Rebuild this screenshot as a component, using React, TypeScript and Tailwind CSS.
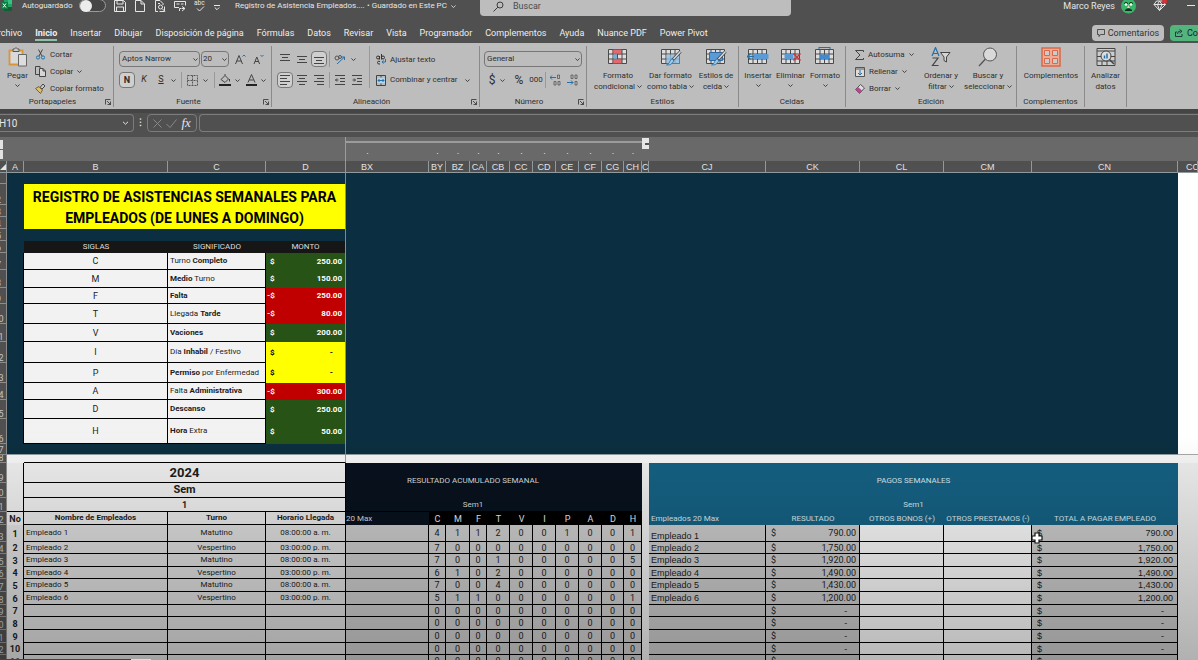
import React from 'react';
import clsx from 'clsx';

const tabs = [
  'Archivo', 'Inicio', 'Insertar', 'Dibujar', 'Disposición de página', 'Fórmulas', 'Datos', 'Revisar',
  'Vista', 'Programador', 'Complementos', 'Ayuda', 'Nuance PDF', 'Power Pivot',
];

const columns = [
  { name: '', width: 'w-[7px]' },
  { name: 'A', width: 'w-[17px]' },
  { name: 'B', width: 'w-36' },
  { name: 'C', width: 'w-[98px]' },
  { name: 'D', width: 'w-20' },
  { name: 'BX', width: 'w-[83px]' },
  { name: 'BY', width: 'w-[17px]' },
  { name: 'BZ', width: 'w-6' },
  { name: 'CA', width: 'w-[17px]' },
  { name: 'CB', width: 'w-[23px]' },
  { name: 'CC', width: 'w-[23px]' },
  { name: 'CD', width: 'w-[23px]' },
  { name: 'CE', width: 'w-[23px]' },
  { name: 'CF', width: 'w-[23px]' },
  { name: 'CG', width: 'w-[22px]' },
  { name: 'CH', width: 'w-[18px]' },
  { name: 'CI', width: 'w-[7px]' },
  { name: 'CJ', width: 'w-[117px]' },
  { name: 'CK', width: 'w-[94px]' },
  { name: 'CL', width: 'w-[84px]' },
  { name: 'CM', width: 'w-[88px]' },
  { name: 'CN', width: 'w-[146px]' },
  { name: 'CO', width: '' },
];

const GREEN = 'bg-[#275317] text-white';
const RED = 'bg-[#c00000] text-white';
const YELLOW = 'bg-[#ffff00] text-black';

const codes = [
  { code: 'C', label: <>Turno <b>Completo</b></>, sign: '$', amount: '250.00', tone: GREEN, height: 'h-[17px]' },
  { code: 'M', label: <><b>Medio</b> Turno</>, sign: '$', amount: '150.00', tone: GREEN, height: 'h-[18px]' },
  { code: 'F', label: <b>Falta</b>, sign: '-$', amount: '250.00', tone: RED, height: 'h-4' },
  { code: 'T', label: <>Llegada <b>Tarde</b></>, sign: '-$', amount: '80.00', tone: RED, height: 'h-5' },
  { code: 'V', label: <b>Vaciones</b>, sign: '$', amount: '200.00', tone: GREEN, height: 'h-[18px]' },
  { code: 'I', label: <>Día <b>Inhabil</b> / Festivo</>, sign: '$', amount: '-', tone: YELLOW, height: 'h-[21px]' },
  { code: 'P', label: <><b>Permiso</b> por Enfermedad</>, sign: '$', amount: '-', tone: YELLOW, height: 'h-5' },
  { code: 'A', label: <>Falta <b>Administrativa</b></>, sign: '-$', amount: '300.00', tone: RED, height: 'h-[17px]' },
  { code: 'D', label: <b>Descanso</b>, sign: '$', amount: '250.00', tone: GREEN, height: 'h-[19px]' },
  { code: 'H', label: <><b>Hora</b> Extra</>, sign: '$', amount: '50.00', tone: GREEN, height: 'h-[25px]' },
];

const AM = '08:00:00 a. m.';
const PM = '03:00:00 p. m.';

const employees = [
  { name: 'Empleado 1', shift: 'Matutino', time: AM, counts: '4112001001', total: '790.00', height: 'h-[17px]' },
  { name: 'Empleado 2', shift: 'Vespertino', time: PM, counts: '7000000000', total: '1,750.00', height: 'h-3' },
  { name: 'Empleado 3', shift: 'Matutino', time: AM, counts: '7001000005', total: '1,920.00', height: 'h-[13px]' },
  { name: 'Empleado 4', shift: 'Vespertino', time: PM, counts: '6102000000', total: '1,490.00', height: 'h-3' },
  { name: 'Empleado 5', shift: 'Matutino', time: AM, counts: '7004000000', total: '1,430.00', height: 'h-[13px]' },
  { name: 'Empleado 6', shift: 'Vespertino', time: PM, counts: '5110000001', total: '1,200.00', height: 'h-[13px]' },
  { name: '', shift: '', time: '', counts: '0000000000', total: '-', height: 'h-3' },
  { name: '', shift: '', time: '', counts: '0000000000', total: '-', height: 'h-[13px]' },
  { name: '', shift: '', time: '', counts: '0000000000', total: '-', height: 'h-[13px]' },
  { name: '', shift: '', time: '', counts: '0000000000', total: '-', height: 'h-3' },
  { name: '', shift: '', time: '', counts: '0000000000', total: '-', height: 'h-[13px]' },
];

const Chevron = ({ className }: { className?: string }) => (
  <svg className={clsx('h-[5px] w-[5px] shrink-0', className)} viewBox="0 0 6 6" fill="none" stroke="currentColor">
    <path d="M0.5 1.8 3 4.2 5.5 1.8" />
  </svg>
);

/* ---------- title bar ---------- */

const TitleBar = () => (
  <header className="flex h-[22px] items-start overflow-hidden text-[9px] leading-3 text-[#e6e6e6]">
    <svg className="ml-px h-3 w-[11px] shrink-0" viewBox="0 0 11 12">
      <rect x="3" y="0" width="8" height="11" fill="#21a366" />
      <rect x="7" y="0" width="4" height="4" fill="#33c481" />
      <rect x="3" y="7" width="8" height="4" fill="#185c37" />
      <rect x="0" y="2" width="7" height="7" fill="#107c41" />
      <path d="M2 3.5 5 7.5M5 3.5 2 7.5" stroke="#fff" />
    </svg>
    <label className="ml-[10px] flex">
      <span className="w-[57px] text-[8px]">Autoguardado</span>
      <input type="checkbox" className="peer sr-only" />
      <span className="-mt-px flex h-[13px] w-[27px] items-center rounded-full border border-[#9a9a9a] bg-[#454545]">
        <span className="h-3 w-3 rounded-full bg-[#ececec]" />
      </span>
    </label>
    <div className="ml-2 flex gap-2">
      <button aria-label="Guardar">
        <svg className="h-3 w-3" viewBox="0 0 12 12" fill="none" stroke="currentColor">
          <path d="M0.5 0.5h9l2 2v9h-11zM3 0.5v3.5h6V0.5M2.5 11.500V7h7v4.500" />
        </svg>
      </button>
      <button aria-label="Nuevo">
        <svg className="h-3 w-3" viewBox="0 0 12 12" fill="none" stroke="currentColor">
          <path d="M1.500 0.500h5.500l3.500 3.500v7.500h-9zM7 0.500v3.500h3.500" />
        </svg>
      </button>
      <button aria-label="Vista previa">
        <svg className="h-3 w-3" viewBox="0 0 12 12" fill="none" stroke="currentColor">
          <path d="M4 11.500H1.500V0.500h4.500l3 3v1.500M4 3.500h2" />
          <circle cx="6.500" cy="7" r="2" />
          <path d="M8 8.500l3 3M5.500 11.500h5v-5" />
        </svg>
      </button>
      <button aria-label="Formulario">
        <svg className="h-3 w-3" viewBox="0 0 12 12" fill="none" stroke="currentColor">
          <path d="M5 7.500H0.500v-6h11v4M2.500 4h3M7 4h2.500M5.500 11V8.500h2M8 6.500l3 2-3 2.500M11 8.500H8" />
        </svg>
      </button>
      <button aria-label="Ortografía">
        <svg className="h-3 w-3" viewBox="0 0 12 12" fill="none" stroke="currentColor">
          <text x="0" y="5" fontSize="6.500" fill="currentColor" stroke="none">abc</text>
          <path d="M3 8.500 5.500 11 10 6.500" />
        </svg>
      </button>
      <button aria-label="Personalizar">
        <svg className="mt-1 h-[6px] w-[6px]" viewBox="0 0 6 6" fill="none" stroke="currentColor">
          <path d="M0 0.500h6M0.800 2.500 3 4.700 5.200 2.500" />
        </svg>
      </button>
    </div>
    <h1 className="ml-[15px] w-[132px] whitespace-nowrap text-[8px]">Registro de Asistencia Empleados....</h1>
    <button className="flex h-3 w-[90px] items-center gap-1 whitespace-nowrap text-[8px] leading-3">
      • Guardado en Este PC <Chevron />
    </button>
    <label className="ml-[23px] flex h-4 w-[311px] items-center gap-[9px] rounded-b-sm bg-[#bdbdbd] pl-[13px] text-[#3c3c3c]">
      <svg className="-mt-1 h-[11px] w-[11px]" viewBox="0 0 11 11" fill="none" stroke="currentColor">
        <circle cx="7" cy="4" r="3" />
        <path d="M4.800 6.200 0.500 10.500" />
      </svg>
      <input aria-label="Buscar" placeholder="Buscar" className="-mt-1 h-3 flex-1 bg-transparent placeholder:text-[#4a4a4a]" />
    </label>
    <span className="ml-auto">Marco Reyes</span>
    <svg className="ml-[6px] h-[15px] w-[15px]" viewBox="0 0 15 15">
      <circle cx="7.500" cy="6" r="7.500" fill="#37b56b" />
      <path d="M3 3.500q2-2 4 0M8 3.500q2-2 4 0M4 10.500q3.500-3.500 7 0z" fill="#1d2a22" stroke="#1d2a22" />
      <circle cx="5" cy="4.500" r="1.300" fill="#fff" />
      <circle cx="10" cy="4.500" r="1.300" fill="#fff" />
      <path d="M7.500 5 9 8H6z" fill="#f2d0b0" />
    </svg>
    <svg className="ml-[17px] h-3 w-[14px]" viewBox="0 0 14 12" fill="none" stroke="currentColor">
      <path d="M3.500 1h6l3 3.500L6.500 10.500 1 4.500zM1 4.500h11.500M4.500 4.500l2 6 2.500-6-2.500-3.500z" />
      <circle cx="11.500" cy="1" r="2.500" fill="#d13438" stroke="none" />
    </svg>
    <button aria-label="Minimizar" className="ml-5 mr-[3px] mt-[5px] h-px w-2 bg-[#e6e6e6]" />
  </header>
);

const TabBar = () => (
  <nav className="flex h-[21px] items-center overflow-hidden text-[9px] leading-3 text-[#eeeeee]">
    <div className="-ml-2 flex gap-[13px]">
      {tabs.map((tab) => (
        <a
          key={tab}
          href="#"
          className={clsx('h-[17px] whitespace-nowrap border-b-2 leading-[18px]', tab === 'Inicio' ? 'border-[#8fc3a9] font-bold' : 'border-transparent')}
        >
          {tab}
        </a>
      ))}
    </div>
    <button className="ml-auto flex h-4 w-[72px] shrink-0 items-center justify-center gap-[3px] rounded-sm bg-[#bdbdbd] text-[#333]">
      <svg className="h-2 w-2" viewBox="0 0 8 8" fill="none" stroke="currentColor" strokeWidth="0.800">
        <path d="M0.500 0.500h7v5h-4l-1.500 2v-2h-1.500z" />
      </svg>
      Comentarios
    </button>
    <button className="-mr-2 ml-[6px] flex h-4 w-9 shrink-0 items-center gap-1 overflow-hidden rounded-l-sm bg-[#53b47c] pl-[5px] text-[#123]">
      <svg className="h-2 w-2 shrink-0" viewBox="0 0 8 8" fill="none" stroke="currentColor" strokeWidth="0.800">
        <path d="M2 3H0.500v4.500h6.500V5M2.500 5q0-3 3-3M4.500 0.500l2.500 1.800-2.500 1.700" />
      </svg>
      Compartir
    </button>
  </nav>
);

/* ---------- ribbon ---------- */

interface GroupProps {
  label: string;
  width: string;
  launcher?: boolean;
  children: React.ReactNode;
}

const Group = ({ label, width, launcher, children }: GroupProps) => (
  <section className={clsx('mb-[2px] mt-[3px] flex shrink-0 flex-col border-r border-[#8a8a8a]', width)}>
    <div className="flex flex-1 items-start">{children}</div>
    <div className="flex h-[10px] items-center">
      <h2 className="flex-1 text-center text-[8px] leading-[10px]">{label}</h2>
      {launcher && (
        <button aria-label={`Más opciones de ${label}`} className="mr-[2px]">
          <svg className="h-[6px] w-[6px]" viewBox="0 0 6 6" fill="none" stroke="currentColor" strokeWidth="0.800">
            <path d="M0.500 5.500V0.500h5M2 2l3.500 3.500M5.500 2.500v3h-3" />
          </svg>
        </button>
      )}
    </div>
  </section>
);

interface BigButtonProps {
  icon: React.ReactNode;
  lines: string[];
  width: string;
  arrow?: 'inline' | 'below';
}

const BigButton = ({ icon, lines, width, arrow }: BigButtonProps) => (
  <button className={clsx('flex shrink-0 flex-col items-center text-[8px] leading-[11px]', width)}>
    <span className="mb-[3px] flex h-[21px] items-center">{icon}</span>
    {lines.map((line, i) => (
      <span key={line} className="flex items-center gap-[2px] whitespace-nowrap">
        {line}
        {arrow === 'inline' && i === lines.length - 1 && <Chevron />}
      </span>
    ))}
    {arrow === 'below' && <Chevron className="mt-[2px]" />}
  </button>
);

interface SmallButtonProps {
  icon: React.ReactNode;
  text: string;
  arrow?: boolean;
}

const SmallButton = ({ icon, text, arrow }: SmallButtonProps) => (
  <button className="flex h-[17px] items-center gap-1 whitespace-nowrap text-[8px]">
    {icon}
    {text}
    {arrow && <Chevron />}
  </button>
);

const Lines = ({ d, active, label }: { d: string; active?: boolean; label: string }) => (
  <button
    aria-label={label}
    className={clsx('flex h-4 w-4 items-center justify-center rounded-sm border', active ? 'border-[#777] bg-[#cfcfcf]' : 'border-transparent')}
  >
    <svg className="h-[10px] w-[10px]" viewBox="0 0 10 10" stroke="#444" fill="none">
      <path d={d} />
    </svg>
  </button>
);

const Divider = () => <span className="mx-px h-4 w-px bg-[#999]" />;

const GridIcon = ({ children }: { children?: React.ReactNode }) => (
  <svg className="h-5 w-[22px]" viewBox="0 0 22 20" fill="none">
    <path d="M1.500 2.500h18v14h-18z" fill="#ddd" />
    <path d="M1.500 2.500h18v14h-18zM1.500 7h18M1.500 12h18M6 2.500v14M10.500 2.500v14M15 2.500v14" stroke="#4a4a4a" />
    {children}
  </svg>
);

const Brush = () => (
  <>
    <path d="M20.500 4.500 12.500 13" stroke="#444" strokeWidth="3" />
    <path d="M20.500 4.500 13.500 12" stroke="#ddd" strokeWidth="1.500" />
    <path d="M13 12q1.500 2-.5 4-2 2.500-6 2 3-1.500 3.500-4 1-2.500 3-2z" fill="#9ccbea" stroke="#2b6ea0" strokeWidth="0.800" />
  </>
);

const Ribbon = () => (
  <div className="flex h-[66px] overflow-hidden bg-[#bdbdbd] text-[#2e2e2e]">
    <Group label="Portapapeles" width="w-[114px]" launcher>
      <BigButton
        width="w-[35px]"
        lines={['Pegar']}
        arrow="below"
        icon={
          <svg className="h-[21px] w-5" viewBox="0 0 20 21" fill="none">
            <path d="M1.500 4.500h13v14h-13z" fill="#d9d9d9" stroke="#d8953a" strokeWidth="1.800" />
            <path d="M5 5.500V3h1.500q1.500-3 3 0H11v2.500z" fill="#ccc" stroke="#555" />
            <path d="M10.500 8.500h8v11.500h-8z" fill="#ddd" stroke="#666" />
          </svg>
        }
      />
      <div className="flex flex-col">
        <SmallButton
          text="Cortar"
          icon={
            <svg className="h-[11px] w-[11px]" viewBox="0 0 11 11" fill="none">
              <path d="M3.500 0.500 7 7M7.500 0.500 4 7" stroke="#444" />
              <circle cx="3" cy="8.500" r="1.600" stroke="#2570a8" />
              <circle cx="8" cy="8.500" r="1.600" stroke="#2570a8" />
            </svg>
          }
        />
        <SmallButton
          text="Copiar"
          icon={
            <svg className="h-[11px] w-[11px]" viewBox="0 0 11 11" fill="none" stroke="#444">
              <path d="M4 8.500H0.500v-8h4.500v2" />
              <path d="M4.500 2.500h3.500l2.500 2.500v5.500h-6zM8 2.500v2.500h2.500" fill="#d6d6d6" />
            </svg>
          }
          arrow
        />
        <SmallButton
          text="Copiar formato"
          icon={
            <svg className="h-[11px] w-[11px]" viewBox="0 0 11 11" fill="none">
              <path d="M0.500 5.500 4 3.500l3.500 3.500L5.500 10.500z" fill="#e0c070" stroke="#7a6030" />
              <path d="M5 4.500 8 1l2 2-3 3z" fill="#ccc" stroke="#444" />
            </svg>
          }
        />
      </div>
    </Group>

    <Group label="Fuente" width="w-[158px]" launcher>
      <div className="flex flex-col gap-[5px] pl-[5px] pt-[5px] text-[9px]">
        <div className="flex items-center">
          <div className="relative flex items-center">
            <select aria-label="Fuente" className="h-4 w-[81px] appearance-none rounded-sm border border-[#777] pl-[2px] text-[8px] leading-none">
              <option>Aptos Narrow</option>
            </select>
            <Chevron className="pointer-events-none absolute right-[2px]" />
          </div>
          <div className="relative ml-px flex items-center">
            <select aria-label="Tamaño de fuente" className="h-4 w-7 appearance-none rounded-sm border border-[#777] pl-px text-[8px] leading-none">
              <option>20</option>
            </select>
            <Chevron className="pointer-events-none absolute right-[2px]" />
          </div>
          <button aria-label="Aumentar fuente" className="ml-[6px] w-[18px]">
            <svg className="h-[11px] w-[11px]" viewBox="0 0 11 11" fill="none">
              <path d="M0.500 10 4 1.500 7.500 10M1.700 7h4.600" stroke="#444" />
              <path d="M7.500 2.500 9 1l1.500 1.500" stroke="#2570a8" />
            </svg>
          </button>
          <button aria-label="Reducir fuente" className="w-[18px]">
            <svg className="h-[11px] w-[11px]" viewBox="0 0 11 11" fill="none">
              <path d="M1 10 3.800 3 6.600 10M2 7.500h3.600" stroke="#444" />
              <path d="M7.500 1 9 2.500 10.500 1" stroke="#2570a8" />
            </svg>
          </button>
        </div>
        <div className="flex h-4 items-center">
          <button className="h-4 w-4 rounded-sm border border-[#777] bg-[#cfcfcf] font-bold leading-[13px]">N</button>
          <button className="w-[18px] italic">K</button>
          <button className="w-4 underline">S</button>
          <Chevron className="ml-[2px] mr-1" />
          <Divider />
          <svg className="ml-1 h-[11px] w-[11px] shrink-0" viewBox="0 0 11 11" fill="none" stroke="#555">
            <path d="M0.500 0.500h10v10h-10zM5.500 0.500v10M0.500 5.500h10" strokeDasharray="2 1" />
          </svg>
          <Chevron className="mx-[5px]" />
          <Divider />
          <svg className="ml-[3px] h-3 w-3 shrink-0" viewBox="0 0 12 12" fill="none" stroke="#444">
            <path d="M2 5.500 6 1.500l3.500 3.500L6 8.500zM6 1.500V0M10.500 5v2.500" />
            <path d="M0 11h12" stroke="#222" strokeWidth="2" />
          </svg>
          <Chevron className="mx-1" />
          <svg className="ml-[2px] h-3 w-[11px] shrink-0" viewBox="0 0 11 12" fill="none" stroke="#444">
            <path d="M2 8.500 5.500 0.500 9 8.500M3.200 6h4.600" />
            <path d="M0 11h11" stroke="#222" strokeWidth="2" />
          </svg>
          <Chevron className="ml-1" />
        </div>
      </div>
    </Group>

    <Group label="Alineación" width="w-[208px]" launcher>
      <div className="flex flex-col gap-[5px] pl-[5px] pt-[5px]">
        <div className="flex items-center gap-px">
          <Lines label="Arriba" d="M0 0.500h10M2 3.500h6M0 6.500h10" />
          <Lines label="Medio" d="M0 2.500h10M2 5.500h6M0 8.500h10" />
          <Lines label="Abajo" active d="M0 3.500h10M2 6.500h6M0 9.500h10" />
          <Divider />
          <svg className="ml-[2px] h-[11px] w-3" viewBox="0 0 12 11" fill="none">
            <circle cx="3" cy="4" r="2" stroke="#555" />
            <circle cx="6" cy="3" r="1.500" stroke="#555" />
            <path d="M3 10 10.500 3M7.500 3h3v3" stroke="#2570a8" />
          </svg>
          <Chevron className="ml-1" />
        </div>
        <div className="flex items-center gap-px">
          <Lines label="Izquierda" active d="M0 0.500h10M0 3.500h7M0 6.500h10M0 9.500h7" />
          <Lines label="Centro" d="M0 0.500h10M2 3.500h6M0 6.500h10M2 9.500h6" />
          <Lines label="Derecha" d="M0 0.500h10M3 3.500h7M0 6.500h10M3 9.500h7" />
          <Divider />
          <Lines label="Disminuir sangría" d="M0 0.500h10M5 3.500h5M5 6.500h5M0 9.500h10M0.500 5h3M2 3.500 0.500 5 2 6.500" />
          <Lines label="Aumentar sangría" d="M0 0.500h10M5 3.500h5M5 6.500h5M0 9.500h10M0.500 5h3M2 3.500 3.500 5 2 6.500" />
        </div>
      </div>
      <div className="ml-1 flex flex-col gap-1 border-l border-[#999] pl-[6px] pt-[5px]">
        <SmallButton
          text="Ajustar texto"
          icon={
            <svg className="h-[11px] w-[10px]" viewBox="0 0 10 11" fill="none">
              <circle cx="2" cy="3.500" r="1.500" stroke="#333" />
              <path d="M3.500 2v3.500M5.500 0v5.500M4 7.500q-2.500-1-2.500 1t2.500 1.500" stroke="#333" />
              <circle cx="7" cy="3.500" r="1.500" stroke="#333" />
              <path d="M9.500 5v3H6M7.500 6.500 6 8l1.500 1.500" stroke="#2570a8" />
            </svg>
          }
        />
        <button className="flex h-4 items-center gap-1 whitespace-nowrap text-[8px]">
          <svg className="h-[11px] w-[10px]" viewBox="0 0 10 11" fill="none">
            <path d="M0.500 0.500h9v10h-9zM5 0.500v2M5 8.500v2" stroke="#444" />
            <path d="M1 3h8v5H1z" fill="#b5d5ea" />
            <path d="M2 5.500h6M3.500 4 2 5.500 3.500 7M6.500 4 8 5.500 6.500 7" stroke="#2570a8" />
          </svg>
          Combinar y centrar
          <Chevron className="ml-[3px]" />
        </button>
      </div>
    </Group>

    <Group label="Número" width="w-[107px]" launcher>
      <div className="flex flex-col gap-[5px] pl-1 pt-[5px] text-[9px]">
        <div className="relative flex items-center">
          <select aria-label="Formato de número" className="h-4 w-[98px] appearance-none rounded-sm border border-[#777] pl-[2px] text-[8px] leading-none">
            <option>General</option>
          </select>
          <Chevron className="pointer-events-none absolute right-[2px]" />
        </div>
        <div className="flex h-4 items-center">
          <button className="w-4 text-[12px]">$</button>
          <Chevron className="mr-[6px]" />
          <button className="w-4 text-[12px]">%</button>
          <button className="ml-px w-4 text-[8px]">000</button>
          <Divider />
          <svg className="ml-[3px] h-3 w-[11px]" viewBox="0 0 11 12" fill="none">
            <path d="M0 3.500h6M2 1.500 0 3.500 2 5.500" stroke="#2570a8" />
            <path d="M7.500 1h2v3.500h-2zM4 7.500h2v3.500h-2zM8 7.500h2v3.500H8z" stroke="#555" strokeWidth="0.800" />
          </svg>
          <svg className="ml-[6px] h-3 w-[11px]" viewBox="0 0 11 12" fill="none">
            <path d="M4 1h2v3.500h-2zM8 1h2v3.500H8zM8 7.500h2v3.500H8z" stroke="#555" strokeWidth="0.800" />
            <path d="M0 8.500h6M4 6.500 6 8.500 4 10.500" stroke="#2570a8" />
          </svg>
        </div>
      </div>
    </Group>

    <Group label="Estilos" width="w-[152px]">
      <BigButton
        width="ml-[5px] w-[52px]"
        lines={['Formato', 'condicional']}
        arrow="inline"
        icon={
          <GridIcon>
            <path d="M6 2.500h8.500v4.500H6zM6 12h8.500v4.500H6z" fill="#e06a6f" stroke="#b0383e" strokeWidth="0.600" />
            <path d="M6.500 7.500H10v4H6.500z" fill="#6fb1e0" />
          </GridIcon>
        }
      />
      <BigButton
        width="w-[53px]"
        lines={['Dar formato', 'como tabla']}
        arrow="inline"
        icon={
          <GridIcon>
            <path d="M6.500 7.500h13v9h-13z" fill="#8fc1e6" opacity="0.800" />
            <Brush />
          </GridIcon>
        }
      />
      <BigButton
        width="w-[38px]"
        lines={['Estilos de', 'celda']}
        arrow="inline"
        icon={
          <GridIcon>
            <path d="M4.500 5.500h13v8h-13z" fill="#5b9bd5" stroke="#2f6aa5" />
            <Brush />
          </GridIcon>
        }
      />
    </Group>

    <Group label="Celdas" width="w-[107px]">
      <BigButton
        width="ml-[3px] w-8"
        lines={['Insertar']}
        arrow="below"
        icon={
          <GridIcon>
            <path d="M6 7h15.500v5H6z" fill="#5b9bd5" />
            <path d="M7 9.500H0.500M3.500 6.500 0.500 9.500l3 3" stroke="#2570a8" strokeWidth="1.300" />
          </GridIcon>
        }
      />
      <BigButton
        width="w-[33px]"
        lines={['Eliminar']}
        arrow="below"
        icon={
          <GridIcon>
            <path d="M4.500 7h9v5h-9z" fill="#5b9bd5" />
            <path d="M13.500 6.500l7 7M20.500 6.500l-7 7" stroke="#c9363c" strokeWidth="1.500" />
          </GridIcon>
        }
      />
      <BigButton
        width="w-9"
        lines={['Formato']}
        arrow="below"
        icon={
          <GridIcon>
            <path d="M6 7.500h9v4.500H6z" fill="#3f8ad0" />
            <path d="M5 0.500h11M5 0v2M16 0v2" stroke="#2570a8" />
          </GridIcon>
        }
      />
    </Group>

    <Group label="Edición" width="w-[171px]">
      <div className="flex w-[74px] flex-col pl-[9px]">
        <SmallButton
          text="Autosuma"
          icon={
            <svg className="h-[10px] w-[9px]" viewBox="0 0 9 10" fill="none" stroke="#444">
              <path d="M8.500 2V0.500H0.500L5 5 0.500 9.500h8V8" />
            </svg>
          }
          arrow
        />
        <SmallButton
          text="Rellenar"
          icon={
            <svg className="h-[10px] w-[10px]" viewBox="0 0 10 10" fill="none">
              <path d="M0.500 0.500h9v9h-9zM0.500 2h9" fill="#ddd" stroke="#555" />
              <path d="M5 3v5M3 6l2 2 2-2" stroke="#2570a8" />
            </svg>
          }
          arrow
        />
        <SmallButton
          text="Borrar"
          icon={
            <svg className="h-[10px] w-[10px]" viewBox="0 0 10 10" fill="none">
              <path d="M0.500 5.500 5.500 0.500l4 3.500-5 5.500z" fill="#ddd" stroke="#555" />
              <path d="M0.500 5.500 3 3l4 3.500-2.500 3z" fill="#b84592" />
            </svg>
          }
          arrow
        />
      </div>
      <BigButton
        width="w-[42px]"
        lines={['Ordenar y', 'filtrar']}
        arrow="inline"
        icon={
          <svg className="h-5 w-5" viewBox="0 0 20 20" fill="none">
            <path d="M1 9 4.500 0.500 8 9M2.300 6.500h4.400" stroke="#2570a8" strokeWidth="1.200" />
            <path d="M1.500 11h5.500L1.500 18.500h6" stroke="#444" strokeWidth="1.200" />
            <path d="M9.500 5.500h9.500L15.500 10v5l-2.500-1.500V10z" fill="#d6d6d6" stroke="#444" />
          </svg>
        }
      />
      <BigButton
        width="w-[52px]"
        lines={['Buscar y', 'seleccionar']}
        arrow="inline"
        icon={
          <svg className="h-5 w-5" viewBox="0 0 20 20" fill="none" stroke="#555">
            <path d="M7.500 12 1 19" strokeWidth="1.300" />
            <circle cx="12" cy="7.500" r="6.500" fill="#d9d9d9" />
          </svg>
        }
      />
    </Group>

    <Group label="Complementos" width="w-[68px]">
      <BigButton
        width="w-[68px]"
        lines={['Complementos']}
        icon={
          <svg className="h-5 w-5" viewBox="0 0 20 20" fill="none" stroke="#d9694a">
            <path d="M1 1h18v18H1z" fill="#efab94" strokeWidth="1.500" />
            <path d="M3.500 3.500h5v5h-5zM11.500 3.500h5v5h-5zM3.500 11.500h5v5h-5zM11.500 11.500h5v5h-5z" fill="#ccc" />
          </svg>
        }
      />
    </Group>

    <Group label="" width="w-[42px]">
      <BigButton
        width="w-[41px]"
        lines={['Analizar', 'datos']}
        icon={
          <svg className="h-5 w-5" viewBox="0 0 20 20" fill="none" stroke="#444">
            <path d="M1 1.500h18v17H1z" fill="#ccc" />
            <path d="M1 4h18M1 9.500h18M1 14h18M6 14v4.500M11 14v4.500" />
            <circle cx="10" cy="9" r="5" fill="#ddd" />
            <path d="M8.500 11.500v-3M11 11.500v-5" stroke="#2570a8" strokeWidth="1.500" />
            <path d="M13.500 12.500 18 17" strokeWidth="1.500" />
          </svg>
        }
      />
    </Group>
  </div>
);

/* ---------- formula bar ---------- */

const FormulaBar = () => (
  <div className="flex h-7 items-start border-t-4 border-[#454545] bg-[#505050] pt-px text-[#e6e6e6]">
    <div className="flex h-[18px] w-[134px] items-center rounded-r-sm border border-l-0 border-[#7c7c7c]">
      <input aria-label="Cuadro de nombres" defaultValue="H10" className="-ml-px h-4 w-full bg-transparent text-[10px]" />
      <Chevron className="mr-1 h-[6px] w-[7px]" />
    </div>
    <span className="w-[13px] text-center text-[11px] leading-[18px]">⁝</span>
    <div className="flex h-[18px] w-[50px] items-center justify-around rounded-sm border border-[#7c7c7c] px-[3px]">
      <svg className="h-[9px] w-[9px]" viewBox="0 0 9 9" stroke="#888">
        <path d="M0.500 0.500l8 8M8.500 0.500l-8 8" />
      </svg>
      <svg className="h-[9px] w-[11px]" viewBox="0 0 11 9" stroke="#888" fill="none">
        <path d="M0.500 5 4 8.500l6.500-8" />
      </svg>
      <button className="font-['Liberation_Serif',serif] text-[13px] italic leading-3">fx</button>
    </div>
    <input aria-label="Barra de fórmulas" className="ml-[2px] h-[18px] flex-1 rounded-l-sm border border-r-0 border-[#7c7c7c] bg-transparent text-[10px]" />
  </div>
);

/* ---------- sheet ---------- */

const NAVY = 'bg-[#0b2f40]';
const cellBlack = 'border-b border-r border-black';

const RowNumber = ({ n }: { n: number }) => (
  <th className="overflow-hidden border-b border-r border-[#8d8d8d] bg-[#505050] align-bottom text-[9px] font-normal leading-[7px] text-[#c4c4c4]">
    <span className="-ml-[10px] block h-[7px] w-[17px] text-center">{n}</span>
  </th>
);

const Money = ({ sign = '$', amount, className }: { sign?: string; amount: string; className?: string }) => (
  <div className={clsx('flex justify-between', className)}>
    <span>{sign}</span>
    <span className={amount === '-' ? 'pr-[9px]' : ''}>{amount}</span>
  </div>
);

const Sheet = () => (
  <table className="w-full table-fixed border-separate border-spacing-0 whitespace-nowrap text-[8px] leading-[10px] text-[#1c1c1c] [&_td]:p-0 [&_th]:p-0">
    <colgroup>
      {columns.map((col) => (
        <col key={col.name} className={col.width} />
      ))}
    </colgroup>
    <thead className="font-['Liberation_Sans',sans-serif] text-[9px] text-[#e2e2e2]">
      <tr className="bg-[#696969]">
        <td className="h-3 align-bottom"><div className="h-[9px] w-[3px] bg-[#e2e2e2]" /></td>
        <td colSpan={4} className="border-r border-[#9c9c9c]" />
        <td colSpan={11} className="align-top"><div className="mt-1 h-[2px] bg-[#9c9c9c]" /></td>
        <td className="align-bottom">
          <button aria-label="Contraer grupo" className="flex h-[11px] w-[7px] items-center justify-end bg-[#e6e6e6]">
            <span className="h-[2px] w-1 bg-[#555]" />
          </button>
        </td>
        <td colSpan={6} />
      </tr>
      <tr className="bg-[#696969] text-center">
        <td className="h-3 align-top"><div className="mt-px h-[9px] w-[3px] bg-[#e2e2e2]" /></td>
        <td colSpan={4} className="border-r border-[#9c9c9c]" />
        {columns.slice(5, 16).map((col) => (
          <td key={col.name} className={clsx('align-top leading-[5px]', col.name === 'BX' && 'pr-10!')}>.</td>
        ))}
        <td colSpan={7} />
      </tr>
      <tr className="bg-[#505050]">
        {columns.map((col) => (
          <th
            key={col.name}
            scope="col"
            className={clsx(
              'h-3 overflow-hidden border-b border-r border-[#8f9a9e] font-normal',
              col.name === 'CO' ? 'pl-2! text-left' : 'text-center',
              col.name === 'BX' && 'pr-10!',
            )}
          >
            {col.name || (
              <svg className="h-[6px] w-[6px]" viewBox="0 0 6 6">
                <path d="M6 0v6H0z" fill="#e6e6e6" />
              </svg>
            )}
          </th>
        ))}
      </tr>
    </thead>
    <tbody>
      <tr>
        <RowNumber n={1} />
        <td colSpan={4} className={clsx('h-[11px] border-r border-[#7d8a90]', NAVY)} />
        <td colSpan={17} rowSpan={17} className={clsx('border-b border-[#8f9a9e]', NAVY)} />
        <td rowSpan={17} className="border-b border-[#a8a8a8] bg-white" />
      </tr>
      <tr className="h-[21px]">
        <RowNumber n={2} />
        <td rowSpan={3} className={NAVY} />
        <td colSpan={3} rowSpan={3} className="border-r border-[#8d8d8d] bg-[#ffff00] pt-[3px]! text-center text-[14px] font-bold leading-[21px] text-black">
          REGISTRO DE ASISTENCIAS SEMANALES PARA
          <br />
          EMPLEADOS (DE LUNES A DOMINGO)
        </td>
      </tr>
      <tr className="h-3"><RowNumber n={3} /></tr>
      <tr className="h-3"><RowNumber n={4} /></tr>
      <tr>
        <RowNumber n={5} />
        <td colSpan={4} className={clsx('h-3 border-r border-[#7d8a90]', NAVY)} />
      </tr>
      <tr className="text-center text-[#dcdcdc]">
        <RowNumber n={6} />
        <td className={clsx('h-3', NAVY)} />
        <td className="bg-[#161616]">SIGLAS</td>
        <td className="bg-[#161616]">SIGNIFICADO</td>
        <td className="border-r border-[#8d8d8d] bg-[#161616]">MONTO</td>
      </tr>
      {codes.map((row, i) => (
        <tr key={row.code}>
          <RowNumber n={i + 7} />
          <td className={clsx('border-r border-black', NAVY)} />
          <td className={clsx('bg-[#f2f2f2] text-center text-[9px]', cellBlack, row.height)}>{row.code}</td>
          <td className={clsx('bg-[#f2f2f2] pl-[2px]!', cellBlack)}>{row.label}</td>
          <td className={clsx('border-r border-[#8d8d8d] font-bold', row.tone)}>
            <Money sign={row.sign} amount={row.amount} className={clsx('pr-[3px]', row.sign === '$' ? 'pl-1' : 'pl-px')} />
          </td>
        </tr>
      ))}
      <tr>
        <RowNumber n={17} />
        <td colSpan={4} className={clsx('h-[11px] border-b border-r border-b-[#8f9a9e] border-r-[#7d8a90]', NAVY)} />
      </tr>
      <tr>
        <RowNumber n={18} />
        <td className="h-2 bg-[#f4f4f4]" />
        <td colSpan={3} className="border-b border-r border-b-black border-r-[#9c9c9c] bg-[#f4f4f4]" />
        <td colSpan={18} className="bg-[#f4f4f4]" />
      </tr>
      <tr>
        <RowNumber n={19} />
        <td rowSpan={3} className="border-b border-r border-black bg-[#ececec]" />
        <td colSpan={3} className={clsx('h-5 bg-[#ececec] text-center text-[13px] font-bold', cellBlack)}>2024</td>
        <td colSpan={11} rowSpan={2} className="bg-[#07111d] pr-[42px]! text-center text-[#d8d8d8]">RESULTADO ACUMULADO SEMANAL</td>
        <td rowSpan={15} className="bg-[#ececec]" />
        <td colSpan={5} rowSpan={2} className="bg-[#156082] text-center text-[#d8e4ea]">PAGOS SEMANALES</td>
        <td rowSpan={15} className="bg-[#ececec]" />
      </tr>
      <tr>
        <RowNumber n={20} />
        <td colSpan={3} className={clsx('h-[15px] bg-[#ececec] text-center text-[11px] font-bold', cellBlack)}>Sem</td>
      </tr>
      <tr>
        <RowNumber n={21} />
        <td colSpan={3} className={clsx('h-[14px] bg-[#ececec] text-center text-[9px] font-bold', cellBlack)}>1</td>
        <td colSpan={11} className="border-b border-black bg-[#07111d] pr-[42px]! text-center text-[#d8d8d8]">Sem1</td>
        <td colSpan={5} className="bg-[#156082] text-center text-[#d8e4ea]">Sem1</td>
      </tr>
      <tr className="text-center">
        <RowNumber n={22} />
        <th className="h-[13px] border-r border-black bg-[#e8e8e8] text-[9px]">No</th>
        <th className={clsx('bg-[#e4e4e4]', cellBlack)}>Nombre de Empleados</th>
        <th className={clsx('bg-[#e4e4e4]', cellBlack)}>Turno</th>
        <th className={clsx('bg-[#e4e4e4]', cellBlack)}>Horario Llegada</th>
        <th className="bg-[#07111d] text-left font-normal text-[#d8d8d8]">20 Max</th>
        {'CMFTVIPADH'.split('').map((letter) => (
          <th key={letter} className="bg-black text-[9px] font-normal text-[#e6e6e6]">{letter}</th>
        ))}
        <th className="bg-[#156082] pl-[2px]! text-left font-normal text-[#d8e4ea]">Empleados 20 Max</th>
        <th className="bg-[#156082] font-normal text-[#d8e4ea]">RESULTADO</th>
        <th className="bg-[#156082] font-normal text-[#d8e4ea]">OTROS BONOS (+)</th>
        <th className="bg-[#156082] font-normal text-[#d8e4ea]">OTROS PRESTAMOS (-)</th>
        <th className="bg-[#156082] font-normal text-[#d8e4ea]">TOTAL A PAGAR EMPLEADO</th>
      </tr>
      {employees.map((row, i) => (
        <tr key={i}>
          <RowNumber n={i + 23} />
          <td className={clsx('border-r border-black bg-[#dedede] text-center text-[9px] font-bold', row.height)}>{i + 1}</td>
          <td className={clsx('bg-[#dadada] pl-[2px]!', cellBlack)}>{row.name}</td>
          <td className={clsx('bg-[#dadada] text-center', cellBlack)}>{row.shift}</td>
          <td className={clsx('bg-[#dadada] text-center', cellBlack)}>{row.time}</td>
          <td className={clsx('bg-[#c8c8c8]', cellBlack)} />
          {row.counts.split('').map((count, c) => (
            <td key={c} className={clsx('bg-[#cacaca] text-center text-[9px]', cellBlack)}>{count}</td>
          ))}
          <td className={clsx("bg-[#c8c8c8] pl-[2px]! font-['Liberation_Sans',sans-serif] text-[9px]", cellBlack, i === 0 && 'align-bottom')}>{row.name}</td>
          <td className={clsx('bg-[#c8c8c8] text-[9px]', cellBlack)}><Money amount={row.total} className="pl-[5px] pr-[3px]" /></td>
          <td className={clsx('bg-[#f6f6f6]', cellBlack)} />
          <td className={clsx('bg-[#f6f6f6]', cellBlack)} />
          <td className={clsx("bg-[#c8c8c8] font-['Liberation_Sans',sans-serif] text-[9px]", cellBlack)}>
            <Money amount={row.total} className="pl-[5px] pr-1" />
          </td>
        </tr>
      ))}
    </tbody>
  </table>
);

const App: React.FC = () => {
  return (
    <main className="relative h-screen overflow-hidden bg-[#505050] font-[Roboto,'Liberation_Sans',sans-serif]">
      <TitleBar />
      <TabBar />
      <Ribbon />
      <FormulaBar />
      <Sheet />

      {/* Player shade and progress line */}
      <div className="pointer-events-none absolute inset-x-0 bottom-0 h-56 bg-gradient-to-b from-transparent to-black/25" />
      <div className="absolute bottom-0 left-0 flex h-px w-full">
        <div className="w-[131px] bg-[#e00000]" />
        <div className="w-5 bg-[#dcdcdc]" />
      </div>

      {/* Cell pointer */}
      <svg className="pointer-events-none absolute left-[1031px] top-[532px] h-3 w-3" viewBox="0 0 12 12">
        <path d="M4 1h4v3h3v4H8v3H4V8H1V4h3z" fill="#fff" stroke="#111" strokeWidth="1.200" />
      </svg>
    </main>
  );
};

export default App;
